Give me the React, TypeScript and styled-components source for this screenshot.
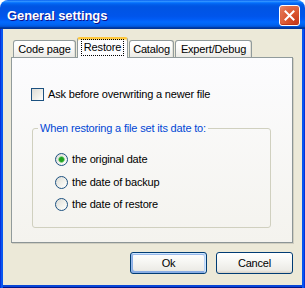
import React from "react";
import styled, { createGlobalStyle } from "styled-components";

const Global = createGlobalStyle`
  html, body { margin: 0; padding: 0; background: #ffffff; }
  body {
    font-family: "Liberation Sans", Arial, sans-serif;
    font-size: 11px;
    letter-spacing: -0.17px;
  }
  * { box-sizing: border-box; }
`;

const Window = styled.div`
  width: 305px;
  height: 288px;
  display: flex;
  flex-direction: column;
`;

const TitleBar = styled.div`
  height: 29px;
  flex: none;
  display: flex;
  align-items: center;
  justify-content: space-between;
  padding: 2px 5px 0 7px;
  border-radius: 8px 8px 0 0;
  background: linear-gradient(
    180deg,
    #0058ee 0%,
    #3593ff 4%,
    #288eff 6%,
    #127dff 8%,
    #036ffc 10%,
    #0262ee 14%,
    #0057e5 20%,
    #0054e3 24%,
    #0055eb 56%,
    #005bf5 66%,
    #026afe 76%,
    #0062ef 86%,
    #0052d6 92%,
    #0040ab 94%,
    #003092 100%
  );
`;

const Title = styled.span`
  color: #ffffff;
  font-family: "Liberation Sans", Arial, sans-serif;
  font-weight: bold;
  font-size: 13px;
  letter-spacing: -0.1px;
  text-shadow: 1px 1px #0f1089;
`;

const CloseButton = styled.div`
  width: 21px;
  height: 21px;
  border: 1px solid #ffffff;
  border-radius: 3px;
  display: flex;
  align-items: center;
  justify-content: center;
  background: radial-gradient(circle at 85% 85%, #c73a1c 0%, #d9532c 40%, #e2714f 80%, #e88e73 100%);
  box-shadow: inset 0 -1px 1px #b8341a;
`;

const Frame = styled.div`
  flex: 1;
  display: flex;
  flex-direction: column;
  background: #ece9d8;
  padding: 8px 12px 14px 11px;
  box-shadow: inset 1px 0 #0831d9, inset 3px 0 #0756f0, inset -1px 0 #0831d9,
    inset -3px 0 #0756f0, inset 0 -1px #00138c, inset 0 -3px #0a46d6;
`;

const TabStrip = styled.div`
  height: 20px;
  display: flex;
  align-items: flex-end;
  padding-left: 2px;
  gap: 1px;
`;

const Tab = styled.div<{ $w: number; $active?: boolean }>`
  width: ${(p) => p.$w}px;
  height: ${(p) => (p.$active ? 21 : 17)}px;
  margin-bottom: ${(p) => (p.$active ? -1 : 0)}px;
  position: relative;
  z-index: ${(p) => (p.$active ? 1 : 0)};
  display: flex;
  align-items: center;
  justify-content: center;
  color: #000000;
  font-size: 11px;
  line-height: 13px;
  border: 1px solid #919b9c;
  border-bottom: none;
  border-radius: 3px 3px 0 0;
  background: ${(p) =>
    p.$active
      ? "#fcfcfe"
      : "linear-gradient(180deg, #ffffff 0%, #fbfbfa 40%, #ecebe6 100%)"};
  border-top: ${(p) => (p.$active ? "2px solid #ffc83c" : "1px solid #919b9c")};
  box-shadow: ${(p) => (p.$active ? "inset 0 1px #fde08a" : "inset -1px 0 #e3e1d7")};
  padding-bottom: ${(p) => (p.$active ? 2 : 0)}px;
`;

const FocusLabel = styled.span`
  outline: 1px dotted #000000;
  outline-offset: 0px;
  padding: 1px 2px;
`;

const Panel = styled.div`
  height: 186px;
  border: 1px solid #919b9c;
  border-right-color: #8c9596;
  border-bottom-color: #8c9596;
  box-shadow: 1px 1px #d0cec0;
  background: linear-gradient(180deg, #fcfcfe 0%, #f4f3ee 100%);
  padding: 30px 0 0 19px;
  display: flex;
  flex-direction: column;
`;

const CheckRow = styled.label`
  display: flex;
  align-items: center;
  gap: 4px;
  height: 13px;
  color: #000000;
  line-height: 13px;
`;

const CheckBox = styled.span`
  width: 13px;
  height: 13px;
  flex: none;
  border: 1px solid #1c5180;
  background: linear-gradient(135deg, #dcdcd7 0%, #f0f0ea 60%, #ffffff 100%);
`;

const Group = styled.fieldset`
  width: 239px;
  margin: 21px 0 0 1px;
  padding: 0;
  border: 1px solid #d0d0bf;
  border-radius: 3px;
  min-width: 0;
`;

const Legend = styled.legend`
  margin-left: 5px;
  padding: 0 2px;
  color: #0046d5;
  font-size: 11px;
  line-height: 13px;
`;

const RadioList = styled.div`
  display: flex;
  flex-direction: column;
  gap: 9.5px;
  padding: 18px 0 16px 22px;
`;

const RadioRow = styled.label`
  display: flex;
  align-items: center;
  gap: 4px;
  height: 13px;
  line-height: 13px;
  color: #000000;
`;

const Radio = styled.span<{ $checked?: boolean }>`
  width: 13px;
  height: 13px;
  flex: none;
  border-radius: 50%;
  border: 1px solid #1c5180;
  background: ${(p) =>
    p.$checked
      ? "radial-gradient(circle at 50% 50%, #21a121 0px, #21a121 2px, #5bc25b 2.6px, #c9e8c5 3.4px, rgba(255,255,255,0) 3.6px), linear-gradient(135deg, #dcdcd7 0%, #ffffff 100%)"
      : "linear-gradient(135deg, #dcdcd7 0%, #f3f3ee 60%, #ffffff 100%)"};
`;

const ButtonRow = styled.div`
  display: flex;
  justify-content: flex-end;
  gap: 9px;
  margin-top: 9px;
`;

const Button = styled.div<{ $default?: boolean }>`
  width: 77px;
  height: 22px;
  display: flex;
  align-items: center;
  justify-content: center;
  color: #000000;
  font-size: 11px;
  border: 1px solid #003c74;
  border-radius: 3px;
  background: linear-gradient(180deg, #ffffff 0%, #f7f7f4 40%, #ecebe6 86%, #d6d0c5 100%);
  box-shadow: ${(p) =>
    p.$default
      ? "inset -1px 1px #cee7ff, inset 1px 2px #98b8ea, inset -2px 2px #bcd4f6, inset 1px -1px #89ade4, inset 2px -2px #89ade4"
      : "none"};
`;

export default function App() {
  return (
    <>
      <Global />
      <Window>
        <TitleBar>
          <Title>General settings</Title>
          <CloseButton>
            <svg width="11" height="11" viewBox="0 0 11 11">
              <path d="M1.5 1.5 L9.5 9.5 M9.5 1.5 L1.5 9.5" stroke="#ffffff" strokeWidth="2" strokeLinecap="square" />
            </svg>
          </CloseButton>
        </TitleBar>
        <Frame>
          <TabStrip>
            <Tab $w={63}>Code page</Tab>
            <Tab $w={51} $active>
              <FocusLabel>Restore</FocusLabel>
            </Tab>
            <Tab $w={45}>Catalog</Tab>
            <Tab $w={77}>Expert/Debug</Tab>
          </TabStrip>
          <Panel>
            <CheckRow>
              <CheckBox />
              Ask before overwriting a newer file
            </CheckRow>
            <Group>
              <Legend>When restoring a file set its date to:</Legend>
              <RadioList>
                <RadioRow>
                  <Radio $checked />
                  the original date
                </RadioRow>
                <RadioRow>
                  <Radio />
                  the date of backup
                </RadioRow>
                <RadioRow>
                  <Radio />
                  the date of restore
                </RadioRow>
              </RadioList>
            </Group>
          </Panel>
          <ButtonRow>
            <Button $default>Ok</Button>
            <Button>Cancel</Button>
          </ButtonRow>
        </Frame>
      </Window>
    </>
  );
}
